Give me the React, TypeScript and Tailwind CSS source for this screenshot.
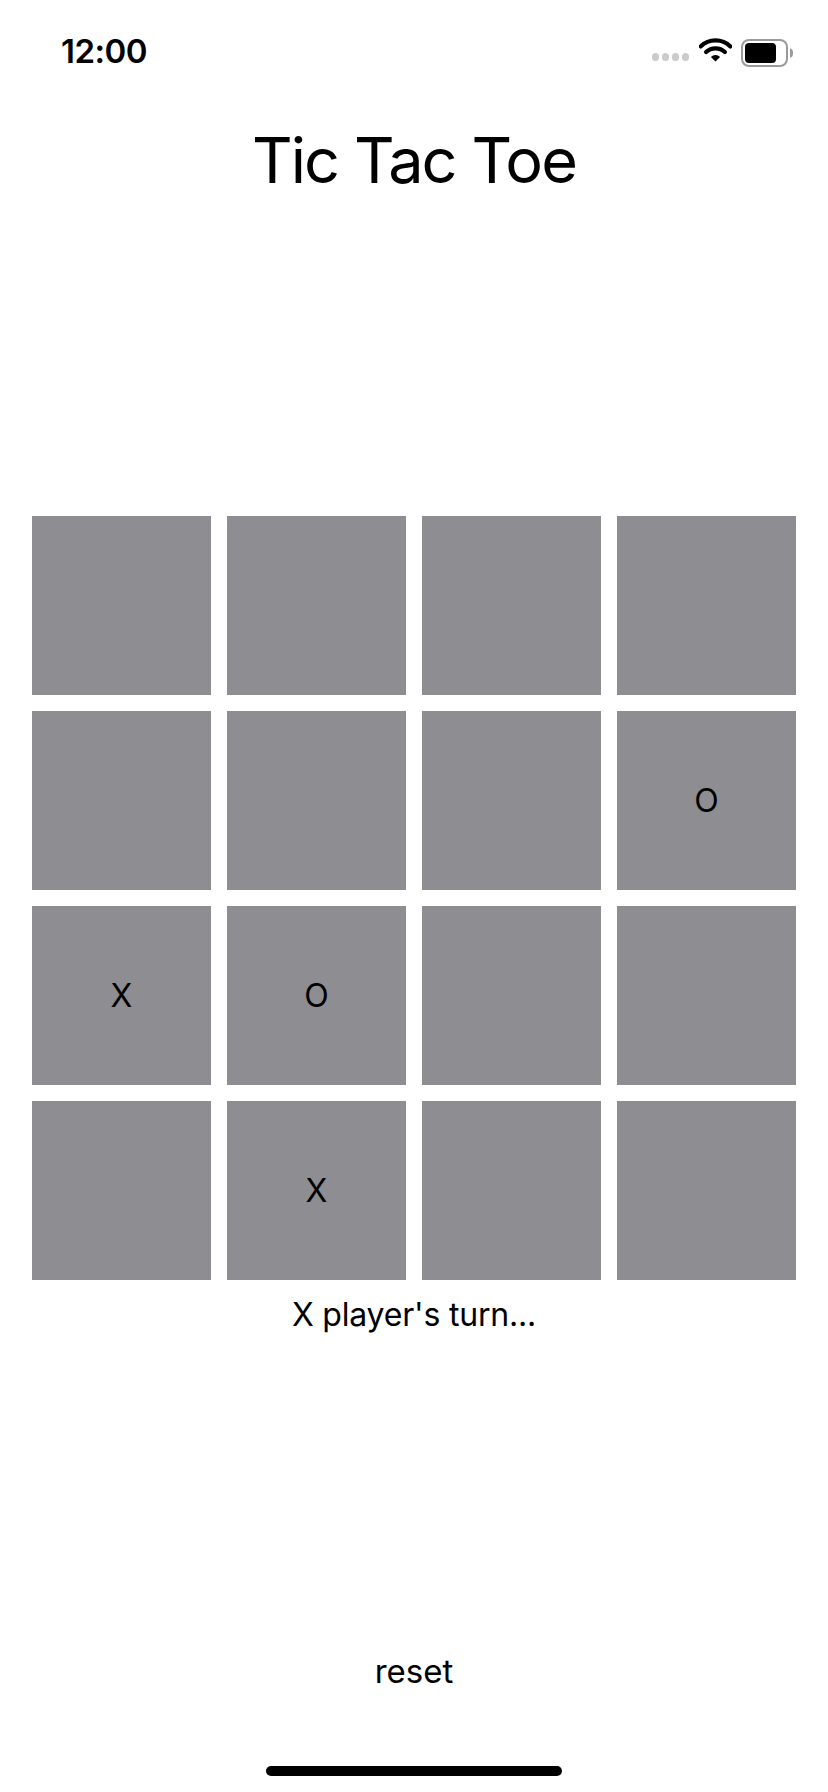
import React from "react";

const board: string[] = [
  "", "", "", "",
  "", "", "", "O",
  "X", "O", "", "",
  "", "X", "", "",
];

function Wifi() {
  return (
    <svg width="33" height="25" viewBox="0 0 33 25" fill="none">
      <path d="M1.6 9.4 A21.5 21.5 0 0 1 31.4 9.4" stroke="#000" strokeWidth="4.2" strokeLinecap="round" />
      <path d="M7.1 15.1 A13.5 13.5 0 0 1 25.9 15.1" stroke="#000" strokeWidth="4.2" strokeLinecap="round" />
      <path d="M16.5 24.5 L11.9 19.9 A6.5 6.5 0 0 1 21.1 19.9 Z" fill="#000" />
    </svg>
  );
}

function Battery() {
  return (
    <svg width="52" height="28" viewBox="0 0 52 28" fill="none">
      <rect x="1" y="1" width="45" height="26" rx="7" stroke="#9a9a9a" strokeWidth="2" />
      <rect x="4" y="4" width="31" height="20" rx="4" fill="#000" />
      <path d="M49 9.5 a3 4.5 0 0 1 0 9 z" fill="#9a9a9a" />
    </svg>
  );
}

export default function App() {
  return (
    <div
      className="w-[828px] h-[1792px] bg-white text-black flex flex-col overflow-hidden"
      style={{ fontFamily: "Inter, 'Liberation Sans', sans-serif" }}
    >
      {/* status bar */}
      <div className="h-[71px] pt-[31px] pl-[61px] pr-[35px] flex justify-between items-start">
        <div className="h-[40px] leading-[40px] text-[33px] font-semibold tracking-[-0.5px]">12:00</div>
        <div className="h-[40px] flex items-center">
          <div className="flex gap-[3px] mt-[12px]">
            <div className="w-[7px] h-[8px] rounded-full bg-[#cbcbcb]" />
            <div className="w-[7px] h-[8px] rounded-full bg-[#cbcbcb]" />
            <div className="w-[7px] h-[8px] rounded-full bg-[#cbcbcb]" />
            <div className="w-[7px] h-[8px] rounded-full bg-[#cbcbcb]" />
          </div>
          <div className="ml-[10px] -mt-[3px]">
            <Wifi />
          </div>
          <div className="ml-[9px] mt-[3px]">
            <Battery />
          </div>
        </div>
      </div>

      {/* title */}
      <div className="mt-[49px] h-[80px] leading-[80px] text-center text-[63px] tracking-[-1.9px]">
        Tic Tac Toe
      </div>

      {/* board */}
      <div className="mt-[316px] px-[32px] grid grid-cols-4 gap-4">
        {board.map((v, i) => (
          <div
            key={i}
            className="h-[179px] bg-[#8e8d92] flex items-center justify-center text-[32px]"
          >
            {v}
          </div>
        ))}
      </div>

      <div className="mt-[15px] h-[40px] leading-[40px] text-center text-[32px] tracking-[-0.2px]">
        X player's turn...
      </div>

      <div className="mt-[316px] h-[40px] leading-[40px] text-center text-[33px]">
        reset
      </div>

      <div className="mt-[75px] flex justify-center">
        <div className="w-[296px] h-[10px] rounded-full bg-black" />
      </div>
    </div>
  );
}
